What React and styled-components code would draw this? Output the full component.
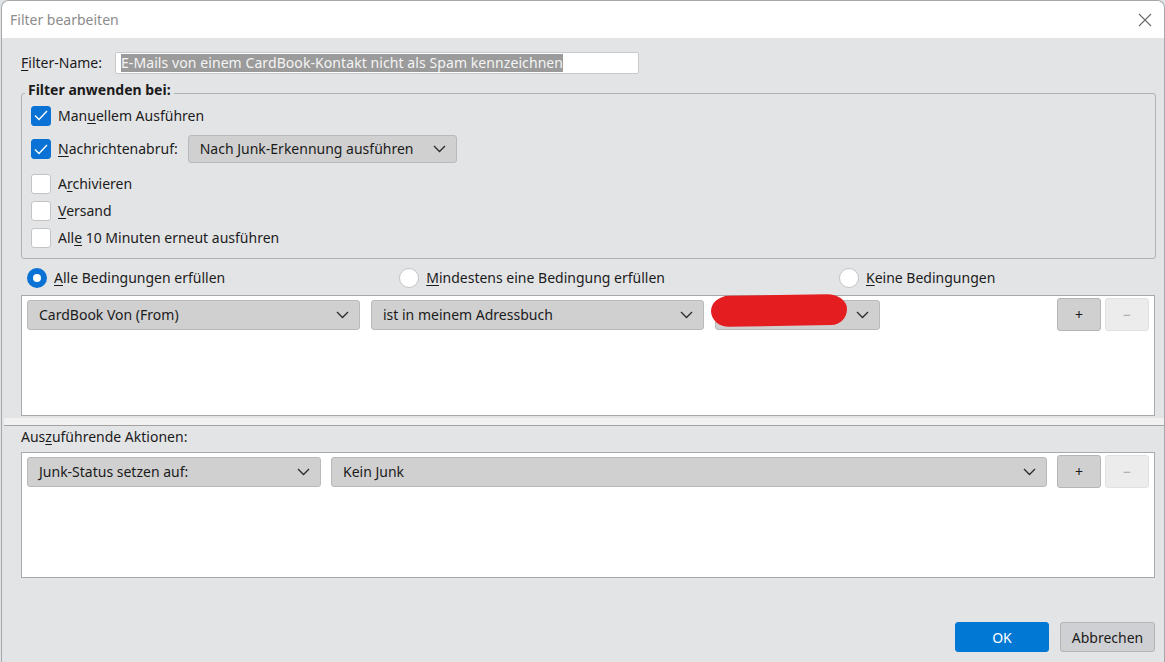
import React from 'react'
import styled, { createGlobalStyle } from 'styled-components'

const GlobalStyle = createGlobalStyle`
  html, body {
    margin: 0;
    padding: 0;
    background: #dfe2e6;
  }
  * { box-sizing: border-box; }
`

const Page = styled.div`
  width: 1165px;
  height: 662px;
  padding-left: 1px;
  display: flex;
  font-family: "Noto Sans", "Open Sans", sans-serif;
  font-size: 14px;
  color: #1b1b1b;
  overflow: hidden;
`

const Window = styled.div`
  flex: 1;
  display: flex;
  flex-direction: column;
  border: 1px solid #a8a8a8;
  border-bottom: none;
  border-radius: 8px 8px 0 0;
  background: #e3e4e6;
  overflow: hidden;
`

const TitleBar = styled.div`
  height: 37px;
  flex-shrink: 0;
  background: #fff;
  display: flex;
  align-items: center;
  justify-content: space-between;
  padding: 0 12px 0 8px;
  color: #8c8c8c;
`

const CloseIcon = styled.svg`
  width: 14px;
  height: 14px;
  stroke: #6a6a6a;
  stroke-width: 1.1;
`

const Content = styled.div`
  flex: 1;
  display: flex;
  flex-direction: column;
  padding: 14px 9px 10px 19px;
`

const NameRow = styled.div`
  display: flex;
  align-items: center;
  height: 22px;
`

const Label = styled.span`
  white-space: nowrap;
  line-height: 18px;
`

const NameField = styled.div`
  margin-left: 13px;
  width: 524px;
  height: 22px;
  background: #fff;
  border: 1px solid #c9c9c9;
  border-radius: 2px;
  padding: 1px 5px;
  display: flex;
  align-items: center;
`

const Selected = styled.span`
  background: #9b9b9b;
  color: #f4f4f4;
  line-height: 18px;
  white-space: nowrap;
  letter-spacing: 0.08px;
`

const Group = styled.div`
  position: relative;
  margin-top: 19px;
  margin-right: -1px;
  border: 1px solid #b1b1b1;
  border-radius: 3px;
  padding: 8px 10px 7px 9px;
  display: flex;
  flex-direction: column;
`

const Legend = styled.span`
  position: absolute;
  top: -13px;
  left: 3px;
  padding: 0 3px;
  background: #e3e4e6;
  font-weight: 700;
  line-height: 18px;
`

const CheckRow = styled.label`
  display: flex;
  align-items: center;
  height: ${p => (p.$tall ? 28 : 27)}px;
  margin: ${p => (p.$tall ? '6px 0 7px' : '0')};
`

const Box = styled.span`
  width: 20px;
  height: 20px;
  flex-shrink: 0;
  border-radius: 3px;
  border: 1px solid ${p => (p.$on ? '#0a72d4' : '#c4c4c4')};
  background: ${p => (p.$on ? '#0a72d4' : '#fff')};
  display: flex;
  align-items: center;
  justify-content: center;
  margin-right: 7px;
`

const Key = styled.u`
  text-decoration-thickness: 1px;
  text-underline-offset: 2px;
`

const Select = styled.div`
  position: relative;
  display: flex;
  align-items: center;
  justify-content: ${p => (p.$end ? 'flex-end' : 'space-between')};
  width: ${p => (p.$w ? `${p.$w}px` : 'auto')};
  flex: ${p => (p.$grow ? 1 : 'none')};
  height: ${p => p.$h || 30}px;
  margin-top: ${p => p.$mt || 0}px;
  margin-left: ${p => p.$ml || 0}px;
  padding: 0 10px 0 11px;
  background: #d0d0d0;
  border: 1px solid #b9b9b9;
  border-radius: 3px;
  white-space: nowrap;
  line-height: 18px;
`

const Chevron = styled.svg`
  width: 13px;
  height: 8px;
  fill: none;
  stroke: #2a2a2a;
  stroke-width: 1.3;
  flex-shrink: 0;
`

const Redaction = styled.div`
  position: absolute;
  left: -5px;
  top: -6px;
  width: 136px;
  height: 31px;
  background: #e41e20;
  border-radius: 18px 20px 16px 18px / 15px 15px 16px 16px;
  transform: rotate(-1deg);
`

const RadioRow = styled.div`
  display: flex;
  align-items: center;
  gap: 174px;
  height: 20px;
  margin: 9px 0 7px 6px;
`

const RadioItem = styled.label`
  display: flex;
  align-items: center;
  white-space: nowrap;
`

const Radio = styled.span`
  width: 20px;
  height: 20px;
  border-radius: 50%;
  margin-right: 7px;
  background: #fff;
  border: ${p => (p.$on ? '6px solid #0a72d4' : '1px solid #c4c4c4')};
`

const ListBox = styled.div`
  height: ${p => p.$h}px;
  background: #fff;
  border: 1px solid #a9a9a9;
  padding: 2px 5px;
  display: flex;
  align-items: flex-start;
  gap: ${p => p.$gap || 11}px;
`

const Buttons = styled.div`
  display: flex;
  gap: 4px;
  margin-left: auto;
`

const SmallButton = styled.button`
  width: 44px;
  height: 33px;
  border-radius: 3px;
  font-family: inherit;
  font-size: 14px;
  padding: 0;
  border: 1px solid ${p => (p.disabled ? '#e1e1e1' : '#b5b5b5')};
  background: ${p => (p.disabled ? '#ececec' : '#d0d0d0')};
  color: ${p => (p.disabled ? '#a8a8a8' : '#1b1b1b')};
`

const Splitter = styled.div`
  margin: 2px -9px 0 -17px;
  height: 8px;
  background: #f1f1f1;
  border-bottom: 1px solid #a3a3a3;
`

const SectionLabel = styled.div`
  margin: 2px 0 6px;
  line-height: 18px;
`

const Footer = styled.div`
  margin-top: auto;
  display: flex;
  justify-content: flex-end;
  gap: 11px;
`

const DialogButton = styled.button`
  height: 30px;
  width: ${p => p.$w}px;
  border-radius: 3px;
  font-family: inherit;
  font-size: 14px;
  padding: 0;
  border: 1px solid ${p => (p.$primary ? '#0078d4' : '#b4b4b4')};
  background: ${p => (p.$primary ? '#0078d4' : '#cfd0d3')};
  color: ${p => (p.$primary ? '#fff' : '#1b1b1b')};
`

const Check = () => (
  <svg width="14" height="11" viewBox="0 0 14 11">
    <polyline points="1,5.5 5,9.5 13,1" fill="none" stroke="#fff" strokeWidth="1.4" />
  </svg>
)

const Down = () => (
  <Chevron viewBox="0 0 13 8">
    <polyline points="1,1 6.5,6.5 12,1" />
  </Chevron>
)

const CheckItem = ({ on, tall, children }) => (
  <CheckRow $tall={tall}>
    <Box $on={on}>{on && <Check />}</Box>
    {children}
  </CheckRow>
)

export default function App() {
  return (
    <Page>
      <GlobalStyle />
      <Window>
        <TitleBar>
          <span>Filter bearbeiten</span>
          <CloseIcon viewBox="0 0 14 14">
            <line x1="1" y1="1" x2="13" y2="13" />
            <line x1="13" y1="1" x2="1" y2="13" />
          </CloseIcon>
        </TitleBar>
        <Content>
          <NameRow>
            <Label><Key>F</Key>ilter-Name:</Label>
            <NameField>
              <Selected>E-Mails von einem CardBook-Kontakt nicht als Spam kennzeichnen</Selected>
            </NameField>
          </NameRow>

          <Group>
            <Legend>Filter anwenden bei:</Legend>
            <CheckItem on><Label>Man<Key>u</Key>ellem Ausführen</Label></CheckItem>
            <CheckItem on tall>
              <Label><Key>N</Key>achrichtenabruf:</Label>
              <Select $w={269} $h={28} $ml={10}>
                Nach Junk-Erkennung ausführen
                <Down />
              </Select>
            </CheckItem>
            <CheckItem><Label>A<Key>r</Key>chivieren</Label></CheckItem>
            <CheckItem><Label><Key>V</Key>ersand</Label></CheckItem>
            <CheckItem><Label>All<Key>e</Key> 10 Minuten erneut ausführen</Label></CheckItem>
          </Group>

          <RadioRow>
            <RadioItem><Radio $on /><Label><Key>A</Key>lle Bedingungen erfüllen</Label></RadioItem>
            <RadioItem><Radio /><Label><Key>M</Key>indestens eine Bedingung erfüllen</Label></RadioItem>
            <RadioItem><Radio /><Label><Key>K</Key>eine Bedingungen</Label></RadioItem>
          </RadioRow>

          <ListBox $h={121}>
            <Select $w={333} $mt={2}>CardBook Von (From)<Down /></Select>
            <Select $w={333} $mt={2}>ist in meinem Adressbuch<Down /></Select>
            <Select $w={165} $mt={2} $end>
              <Redaction />
              <Down />
            </Select>
            <Buttons>
              <SmallButton>+</SmallButton>
              <SmallButton disabled>−</SmallButton>
            </Buttons>
          </ListBox>

          <Splitter />
          <SectionLabel>Aus<Key>z</Key>uführende Aktionen:</SectionLabel>

          <ListBox $h={126} $gap={10}>
            <Select $w={294} $mt={2}>Junk-Status setzen auf:<Down /></Select>
            <Select $grow $mt={2}>Kein Junk<Down /></Select>
            <Buttons>
              <SmallButton>+</SmallButton>
              <SmallButton disabled>−</SmallButton>
            </Buttons>
          </ListBox>

          <Footer>
            <DialogButton $primary $w={94}>OK</DialogButton>
            <DialogButton $w={95}>Abbrechen</DialogButton>
          </Footer>
        </Content>
      </Window>
    </Page>
  )
}
